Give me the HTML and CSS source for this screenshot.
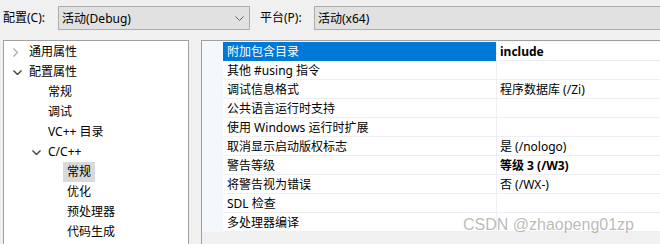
FILE: index.html
```html
<!DOCTYPE html>
<html lang="zh-CN">
<head>
	<meta charset="UTF-8">
	<title>属性页</title>
	<link rel="stylesheet" href="styles.css">
</head>
<body>

<div class="toolbar">
	<span class="label">配置(C):</span>
	<div class="combo">
		<span class="combo-text">活动(Debug)</span>
		<svg class="chev" width="9" height="5" viewBox="0 0 9 5"><path d="M0.5 0.5 L4.5 4.5 L8.5 0.5" fill="none" stroke="#606060" stroke-width="1"/></svg>
	</div>
	<span class="label label2">平台(P):</span>
	<div class="combo combo2">
		<span class="combo-text">活动(x64)</span>
	</div>
</div>

<div class="main">
	<div class="tree">
		<div class="node lv1"><span class="caret"><svg width="5" height="9" viewBox="0 0 5 9"><path d="M0.5 0.5 L4.5 4.5 L0.5 8.5" fill="none" stroke="#a8a8a8" stroke-width="1.2"/></svg></span><span class="name">通用属性</span></div>
		<div class="node lv1"><span class="caret"><svg width="9" height="5" viewBox="0 0 9 5"><path d="M0.5 0.5 L4.5 4.5 L8.5 0.5" fill="none" stroke="#404040" stroke-width="1.4"/></svg></span><span class="name">配置属性</span></div>
		<div class="node lv2"><span class="caret"></span><span class="name">常规</span></div>
		<div class="node lv2"><span class="caret"></span><span class="name">调试</span></div>
		<div class="node lv2"><span class="caret"></span><span class="name">VC++ 目录</span></div>
		<div class="node lv2"><span class="caret"><svg width="9" height="5" viewBox="0 0 9 5"><path d="M0.5 0.5 L4.5 4.5 L8.5 0.5" fill="none" stroke="#404040" stroke-width="1.4"/></svg></span><span class="name">C/C++</span></div>
		<div class="node lv3"><span class="caret"></span><span class="name selected">常规</span></div>
		<div class="node lv3"><span class="caret"></span><span class="name">优化</span></div>
		<div class="node lv3"><span class="caret"></span><span class="name">预处理器</span></div>
		<div class="node lv3"><span class="caret"></span><span class="name">代码生成</span></div>
	</div>

	<div class="props">
		<div class="grid">
			<div class="row"><span class="key active">附加包含目录</span><span class="val bold">include</span></div>
			<div class="row"><span class="key">其他 #using 指令</span><span class="val"></span></div>
			<div class="row"><span class="key">调试信息格式</span><span class="val">程序数据库 (/Zi)</span></div>
			<div class="row"><span class="key">公共语言运行时支持</span><span class="val"></span></div>
			<div class="row"><span class="key">使用 Windows 运行时扩展</span><span class="val"></span></div>
			<div class="row"><span class="key">取消显示启动版权标志</span><span class="val">是 (/nologo)</span></div>
			<div class="row"><span class="key">警告等级</span><span class="val bold">等级 3 (/W3)</span></div>
			<div class="row"><span class="key">将警告视为错误</span><span class="val">否 (/WX-)</span></div>
			<div class="row"><span class="key">SDL 检查</span><span class="val"></span></div>
			<div class="row"><span class="key">多处理器编译</span><span class="val"></span></div>
		</div>
	</div>
</div>

<div class="watermark">CSDN @zhaopeng01zp</div>

</body>
</html>
```

FILE: styles.css
```css
html,body{margin:0;padding:0;}
body{width:660px;height:244px;overflow:hidden;position:relative;background:#f0f0f0;color:#000;font-size:12px;font-family:"Noto Sans","Noto Sans CJK SC",sans-serif;}

.toolbar{display:flex;align-items:center;height:24px;padding:6px 0 0 3px;}
.label{width:55px;line-height:24px;white-space:nowrap;}
.label2{width:54px;margin-left:10px;}
.combo{width:192px;height:24px;box-sizing:border-box;border:1px solid #adadad;background:#e1e1e1;display:flex;align-items:center;padding-left:3px;}
.combo-text{flex:1;white-space:nowrap;}
.chev{margin-right:5px;}
.combo2{flex:1;border-right:none;}

.main{display:flex;padding-left:3px;margin-top:10px;}

.tree{width:186px;height:210px;box-sizing:border-box;border:1px solid #a0a0a0;border-bottom:none;background:#fff;padding-top:1px;}
.node{display:flex;align-items:center;height:20px;}
.lv1{padding-left:9px;}
.lv2{padding-left:28px;}
.lv3{padding-left:47px;}
.caret{width:12px;height:20px;display:flex;align-items:center;}
.name{padding:0 4px;line-height:20px;white-space:nowrap;}
.selected{background:#d9d9d9;}

.props{flex:1;margin-left:12px;height:210px;border-left:1px solid #a0a0a0;border-top:1px solid #a0a0a0;}
.grid{background:#f4f7fc;padding:1px 0 0 21px;}
.row{display:flex;height:19px;}
.key{width:273px;box-sizing:border-box;padding:1px 0 0 4px;line-height:17px;background:#fff;border-bottom:1px solid #eeeef4;white-space:nowrap;}
.key.active{background:#0078d7;color:#fff;border-bottom-color:#0078d7;}
.val{flex:1;box-sizing:border-box;padding:1px 0 0 3px;line-height:17px;background:#fff;border-left:1px solid #eeeef4;border-bottom:1px solid #eeeef4;white-space:nowrap;}
.bold{font-weight:bold;}

.watermark{position:absolute;left:463px;top:216px;font:16px "Liberation Sans",Arial,sans-serif;color:rgba(140,140,140,0.6);white-space:nowrap;}
```
